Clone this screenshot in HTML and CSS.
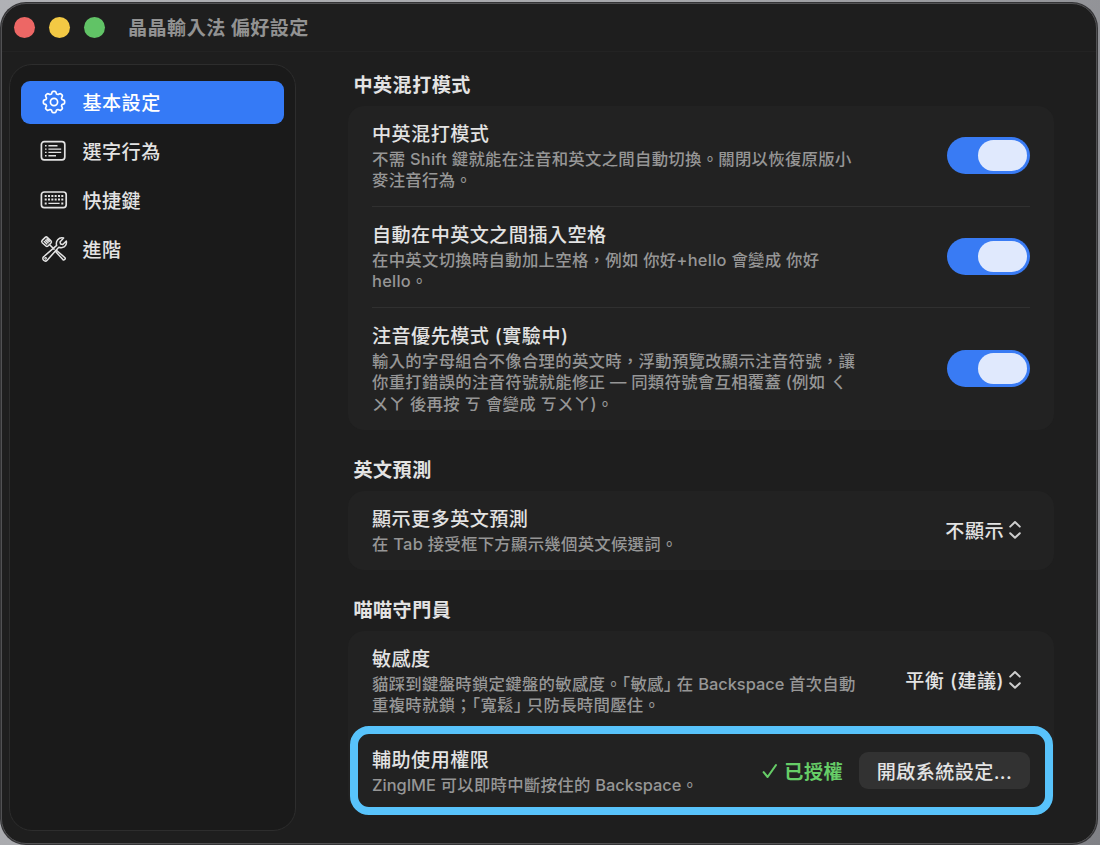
FILE: index.html
```html
<!DOCTYPE html>
<html lang="zh-Hant">
<head>
<meta charset="utf-8">
<title>晶晶輸入法 偏好設定</title>
<link rel="stylesheet" href="styles.css">
</head>
<body>
<div class="window">
  <header class="titlebar">
    <div class="lights"><i class="light red"></i><i class="light yellow"></i><i class="light green"></i></div>
    <h1>晶晶輸入法 偏好設定</h1>
  </header>
  <div class="body">
    <nav class="sidebar">
      <a class="item active">
        <svg class="icon" viewBox="0 0 28 28"><path d="M11.5 5.9C12.1 4.5 11.8 3.4 13 3.4H15C16.2 3.4 15.9 4.5 16.5 5.9 17 6.3 17.4 6.4 18 6.5 19.4 6 20 5 20.8 5.8L22.2 7.2C23 8 22 8.6 21.5 10 21.6 10.6 21.7 11 22.1 11.5 23.5 12.1 24.6 11.8 24.6 13V15C24.6 16.2 23.5 15.9 22.1 16.5 21.7 17 21.6 17.4 21.5 18 22 19.4 23 20 22.2 20.8L20.8 22.2C20 23 19.4 22 18 21.5 17.4 21.6 17 21.7 16.5 22.1 15.9 23.5 16.2 24.6 15 24.6H13C11.8 24.6 12.1 23.5 11.5 22.1 11 21.7 10.6 21.6 10 21.5 8.6 22 8 23 7.2 22.2L5.8 20.8C5 20 6 19.4 6.5 18 6.4 17.4 6.3 17 5.9 16.5 4.5 15.9 3.4 16.2 3.4 15V13C3.4 11.8 4.5 12.1 5.9 11.5 6.3 11 6.4 10.6 6.5 10 6 8.6 5 8 5.8 7.2L7.2 5.8C8 5 8.6 6 10 6.5 10.6 6.4 11 6.3 11.5 5.9Z"/><circle cx="14" cy="14" r="3.6"/></svg>
        <span>基本設定</span>
      </a>
      <a class="item">
        <svg class="icon" viewBox="0 0 28 28"><rect x="1.4" y="4.7" width="23.4" height="18.2" rx="2.8"/><path class="thin" d="M8.4 8.8H17.5M8.4 12.1H21.2M8.4 15.4H21.2M8.4 18.7H16M5 8.8H6.6M5 12.1H6.6M5 15.4H6.6M5 18.7H6.6"/></svg>
        <span>選字行為</span>
      </a>
      <a class="item">
        <svg class="icon" viewBox="0 0 28 28"><rect x="1.4" y="6" width="24.8" height="15.6" rx="2.8"/><path class="keys" d="M4.7 10H23.3M4.7 13.4H23.3"/><path class="keys" d="M4.7 17.4H6.7M21.3 17.4H23.3"/><path class="thin" d="M8.4 17.4H19.6"/></svg>
        <span>快捷鍵</span>
      </a>
      <a class="item">
        <svg class="icon" viewBox="0 0 28 28"><path class="fine" d="M2.2 5.4 5.2 2.4C5.8 1.8 6.8 1.8 7.5 2.5L11 5.9C11.6 6.6 11.6 7.4 11 8L8 11C7.4 11.6 6.5 11.6 5.9 11L2.2 7.7C1.6 7 1.6 6 2.2 5.4ZM4.3 6.5 6.8 9M5.6 5.2 8.1 7.7M6.9 4.1 9.3 6.5"/><path class="fine" d="M9.7 9.8 14 14.1M16.4 15.2 25 22.7C26 23.7 24 25.6 22.9 24.6L15.4 16.3"/><path class="fine" d="M23.6 3.1 20 6.9 20.6 9.1 22.8 9.6 26.3 6C27 9.2 25.1 12.2 22.2 12.6 20.9 12.8 19.9 12.6 18.8 12.2L7.2 25.2C6.2 26.3 4.6 26.2 3.6 25.3 2.5 24.3 2.6 22.6 3.7 21.7L16.7 10.4C15.3 6.5 18.6 1.8 23.6 3.1Z"/><circle cx="5.6" cy="23.3" r=".5"/></svg>
        <span>進階</span>
      </a>
    </nav>
    <main class="content">
      <section>
        <h2>中英混打模式</h2>
        <div class="card">
          <div class="row">
            <div class="text"><h3>中英混打模式</h3><p>不需 Shift 鍵就能在注音和英文之間自動切換。關閉以恢復原版小<br>麥注音行為。</p></div>
            <span class="switch"><i></i></span>
          </div>
          <div class="row">
            <div class="text"><h3>自動在中英文之間插入空格</h3><p>在中英文切換時自動加上空格，例如 你好+hello 會變成 你好<br>hello。</p></div>
            <span class="switch"><i></i></span>
          </div>
          <div class="row">
            <div class="text"><h3>注音優先模式 (實驗中)</h3><p>輸入的字母組合不像合理的英文時，浮動預覽改顯示注音符號，讓<br>你重打錯誤的注音符號就能修正 — 同類符號會互相覆蓋 (例如 ㄑ<br>ㄨㄚ 後再按 ㄎ 會變成 ㄎㄨㄚ)。</p></div>
            <span class="switch"><i></i></span>
          </div>
        </div>
      </section>
      <section>
        <h2>英文預測</h2>
        <div class="card">
          <div class="row">
            <div class="text"><h3>顯示更多英文預測</h3><p>在 Tab 接受框下方顯示幾個英文候選詞。</p></div>
            <span class="picker">不顯示<svg viewBox="0 0 12 20"><path d="M1.2 6.6 6 2 10.8 6.6M1.2 13.2 6 17.8 10.8 13.2"/></svg></span>
          </div>
        </div>
      </section>
      <section>
        <h2>喵喵守門員</h2>
        <div class="card">
          <div class="row">
            <div class="text"><h3>敏感度</h3><p>貓踩到鍵盤時鎖定鍵盤的敏感度。<span class="half">「</span>敏感<span class="half">」</span> 在 <span class="latin">Backspace</span> 首次自動<br>重複時就鎖；<span class="half">「</span>寬鬆<span class="half">」</span> 只防長時間壓住。</p></div>
            <span class="picker">平衡 (建議)<svg viewBox="0 0 12 20"><path d="M1.2 6.6 6 2 10.8 6.6M1.2 13.2 6 17.8 10.8 13.2"/></svg></span>
          </div>
          <div class="row focus">
            <div class="text"><h3>輔助使用權限</h3><p><span class="latin">ZingIME</span> 可以即時中斷按住的 <span class="latin">Backspace</span>。</p></div>
            <div class="actions">
              <span class="granted"><svg viewBox="0 0 16 16"><path d="M1.6 9.2 5.6 14 14 2"/></svg>已授權</span>
              <button class="button">開啟系統設定...</button>
            </div>
          </div>
        </div>
      </section>
    </main>
  </div>
</div>
</body>
</html>
```
FILE: styles.css
```css
* { box-sizing: border-box; }
body {
  margin: 0;
  width: 1100px;
  height: 845px;
  overflow: hidden;
  padding: 3px 3px 1px 1px;
  background: linear-gradient(115deg, #b0b1b5, #a6a7ab 45%, #808186);
  font-family: Inter, "Noto Sans CJK TC", sans-serif;
  color: #e3e3e3;
  letter-spacing: 0.45px;
}
h1, h2, h3, p { margin: 0; }
.window {
  height: 841px;
  border: 1.5px solid #515153;
  border-radius: 25px;
  background: #1e1e1e;
  box-shadow: 0 0 0 1px #343436;
  overflow: hidden;
}
.titlebar {
  height: 48px;
  padding: 0 0 1px 12px;
  border-bottom: 1px solid #232323;
  display: flex;
  align-items: center;
  gap: 23px;
}
.lights { display: flex; gap: 14px; }
.light { width: 21px; height: 21px; border-radius: 50%; }
.red { background: #ed6765; }
.yellow { background: #f3c944; }
.green { background: #61c366; }
h1 { margin-top: 1px; font-size: 19.1px; line-height: 28px; font-weight: 700; color: #929292; }
.body { display: flex; height: 790px; padding: 12px 0 10px 7px; }
.sidebar {
  width: 287px;
  height: 767px;
  padding: 16px 11px;
  border: 1px solid #2d2d2d;
  border-radius: 23px;
  background: #1a1a1a;
  display: flex;
  flex-direction: column;
  gap: 5.8px;
}
.item {
  height: 42.9px;
  padding-left: 19px;
  border-radius: 9px;
  display: flex;
  align-items: center;
  gap: 14.5px;
  font-size: 19.1px;
  font-weight: 500;
}
.active { background: #357af6; color: #fff; }
.icon {
  width: 28px;
  height: 28px;
  fill: none;
  stroke: currentColor;
  stroke-width: 1.7;
  stroke-linejoin: round;
  stroke-linecap: round;
}
.fine { stroke-width: 1.5; }
.thin { stroke-linecap: butt; stroke-width: 1.4; }
.keys { stroke-linecap: butt; stroke-width: 2; stroke-dasharray: 2 1.32; }
.content { width: 706px; margin-left: 52px; padding-top: 5px; }
h2 {
  height: 37px;
  padding-left: 5.5px;
  font-size: 19.1px;
  line-height: 33px;
  font-weight: 700;
}
section + section { margin-top: 24.5px; }
.card { border-radius: 16px; background: #222; padding: 0 24px; }
.row {
  position: relative;
  padding: 14px 0 15.5px;
  display: flex;
  align-items: center;
  justify-content: space-between;
}
.row + .row { border-top: 1px solid #303030; }
.text { white-space: nowrap; padding-top: 1px; margin-bottom: -1px; }
h3 { font-size: 19.1px; line-height: 26px; font-weight: 500; }
p {
  margin-top: 1.5px;
  font-size: 16.4px;
  line-height: 21.5px;
  font-weight: 500;
  letter-spacing: 0.27px;
  color: #969696;
}
.latin { letter-spacing: 0; }
.half { font-feature-settings: "halt"; }
.switch {
  width: 83px;
  height: 37px;
  padding: 3px;
  border-radius: 19px;
  background: #397bf4;
  display: flex;
  justify-content: flex-end;
}
.switch i { width: 49px; height: 31px; border-radius: 16px; background: #e0e9fd; }
.picker {
  padding-right: 9px;
  display: flex;
  align-items: center;
  gap: 5px;
  font-size: 19.1px;
  font-weight: 500;
}
.picker svg { width: 12px; height: 20px; fill: none; stroke: #cfcfcf; stroke-width: 2; stroke-linecap: round; stroke-linejoin: round; }
.focus::after {
  content: "";
  position: absolute;
  inset: -6px -23px -4.5px -22px;
  border: 8px solid #58c3fb;
  border-radius: 19px;
}
.actions { display: flex; align-items: center; gap: 16px; }
.granted { display: flex; align-items: center; gap: 6px; color: #66cd67; font-size: 19.1px; font-weight: 700; }
.granted svg { width: 16px; height: 16px; fill: none; stroke: currentColor; stroke-width: 2.1; stroke-linecap: round; stroke-linejoin: round; }
.button {
  width: 171px;
  height: 37px;
  border: 0;
  padding: 0;
  border-radius: 9px;
  background: #323232;
  color: #e3e3e3;
  font: inherit;
  font-size: 19.1px;
  font-weight: 500;
  letter-spacing: 0.4px;
}
```
